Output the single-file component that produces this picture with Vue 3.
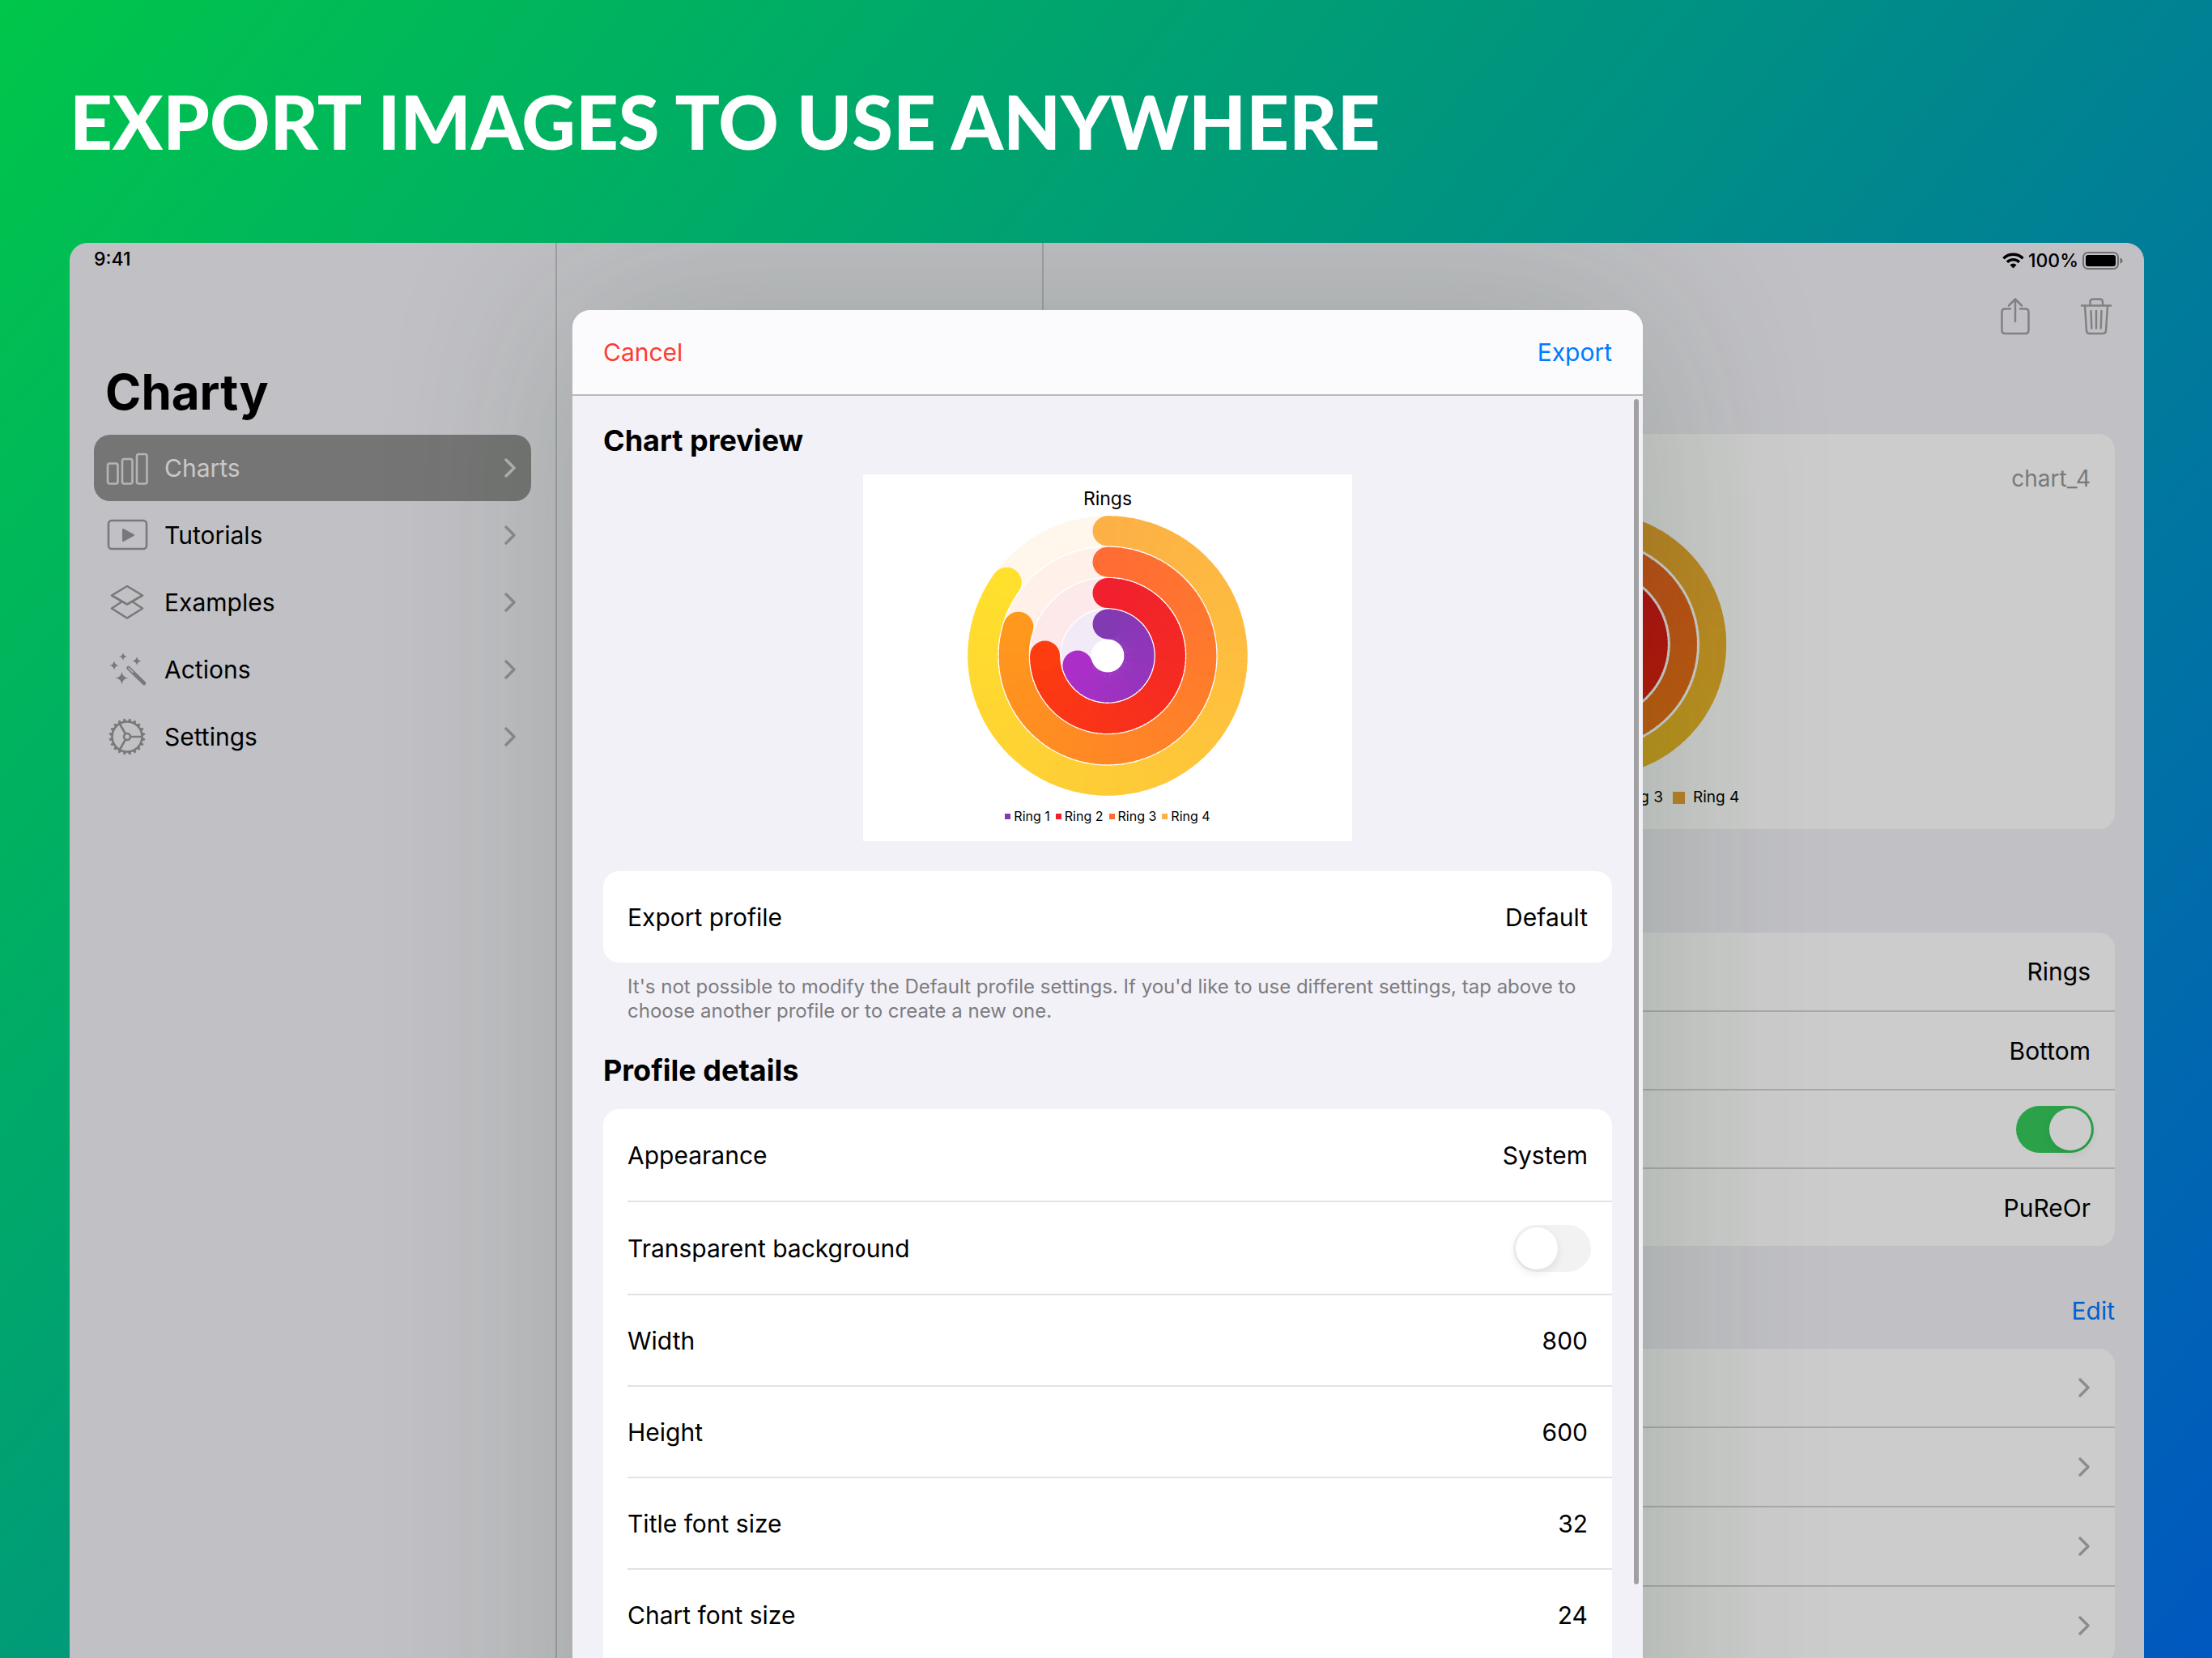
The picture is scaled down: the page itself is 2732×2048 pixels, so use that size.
<script setup>
import { reactive } from 'vue'

const menu = [
  { name: 'Charts', icon: 'charts', active: true },
  { name: 'Tutorials', icon: 'tutorials' },
  { name: 'Examples', icon: 'examples' },
  { name: 'Actions', icon: 'actions' },
  { name: 'Settings', icon: 'settings' },
]

const rings = [
  { name: 'Ring 1', from: [130, 58, 178], to: [172, 46, 200], share: 0.7 },
  { name: 'Ring 2', from: [240, 32, 46], to: [253, 60, 16], share: 0.75 },
  { name: 'Ring 3', from: [255, 108, 52], to: [255, 152, 28], share: 0.8 },
  { name: 'Ring 4', from: [253, 176, 70], to: [255, 224, 44], share: 0.85 },
]

const rgb = (c) => `rgb(${c.map(Math.round).join(',')})`
const mix = (a, b, t) => a.map((v, i) => v + (b[i] - v) * t)
const deepen = (c) => c.map((v, i) => Math.max(0, v - [20, 15, 20][i]))
const point = (r, deg) => {
  const a = (deg * Math.PI) / 180
  return [r * Math.sin(a), -r * Math.cos(a)]
}

// A ring is a chain of short arcs, so its colour can turn with the angle.
function buildRings(inner, pitch, tone = (c) => c) {
  return rings.map((ring, i) => {
    const r = inner + pitch * i
    const sweep = ring.share * 360
    const steps = 90
    const arcs = []
    for (let s = 0; s < steps; s++) {
      const [x0, y0] = point(r, (sweep * s) / steps)
      const [x1, y1] = point(r, Math.min(sweep, (sweep * (s + 1)) / steps + 1))
      arcs.push({ d: `M${x0} ${y0}A${r} ${r} 0 0 1 ${x1} ${y1}`, color: rgb(tone(mix(ring.from, ring.to, s / steps))) })
    }
    const [endX, endY] = point(r, sweep)
    return { r, arcs, endX, endY, start: rgb(tone(ring.from)), end: rgb(tone(ring.to)) }
  })
}
const previewRings = buildRings(39, 38.4)
const detailRings = buildRings(38, 36.2, deepen)

const teeth = Array.from({ length: 20 }, (_, i) => i * 18)

const settings = reactive({ title: true, transparent: false })
const details = [
  { label: 'Appearance', value: 'System' },
  { label: 'Transparent background', toggle: true },
  { label: 'Width', value: '800' },
  { label: 'Height', value: '600' },
  { label: 'Title font size', value: '32' },
  { label: 'Chart font size', value: '24' },
]
</script>

<template>
  <main class="poster">
    <h1 class="headline">EXPORT IMAGES TO USE ANYWHERE</h1>

    <div class="device">
      <div class="panes">
        <nav class="sidebar" aria-label="Main">
          <span class="clock">9:41</span>
          <h2 class="app-name">Charty</h2>
          <a v-for="item in menu" :key="item.name" href="#" class="menu-item" :class="{ active: item.active }">
            <svg class="menu-icon" viewBox="0 0 52 52" fill="none" stroke="currentColor" stroke-width="2.6" stroke-linejoin="round" stroke-linecap="round" aria-hidden="true">
              <g v-if="item.icon === 'charts'">
                <rect x="2" y="20.500" width="12.500" height="25" rx="2.500" />
                <rect x="20" y="15" width="12.500" height="30.500" rx="2.500" />
                <rect x="38" y="9" width="12.500" height="36.500" rx="2.500" />
              </g>
              <g v-else-if="item.icon === 'tutorials'">
                <rect x="3" y="8" width="47" height="35" rx="4" />
                <path d="M21 19v14l13-7z" fill="currentColor" stroke-width="2" />
              </g>
              <g v-else-if="item.icon === 'examples'">
                <path d="M26 6L45 17.500 26 28.500 7 17.500z" />
                <path d="M19 25.500L7 33.500 26 45.500 45 33.500 33 25.500" />
              </g>
              <g v-else-if="item.icon === 'actions'">
                <g fill="currentColor" stroke="none">
                  <path d="M21 5q.6 4.400 5 5q-4.400.6-5 5q-.6-4.400-5-5q4.400-.6 5-5z" />
                  <path d="M38 10q.6 4.900 6 5.500q-5.400.6-6 5.500q-.6-4.900-6-5.500q5.400-.6 6-5.500z" />
                  <path d="M10 15q.6 5.400 6 6q-5.400.6-6 6q-.6-5.400-6-6q5.400-.6 6-6z" />
                  <path d="M19.500 28.500q.8 7.200 8 8q-7.200.8-8 8q-.8-7.200-8-8q7.200-.8 8-8z" />
                </g>
                <path d="M27.500 24L47 43" stroke-width="4.600" />
                <path d="M27.800 24.200L33 29.300" stroke="#f2f1f7" stroke-width="1.400" />
              </g>
              <g v-else>
                <circle cx="26" cy="26" r="18.500" />
                <circle cx="26" cy="26" r="4" />
                <path d="M30 26h14M24 22.500L16.800 10M24 29.500L16.800 42" />
                <path v-for="a in teeth" :key="a" d="M23.800 7.500l1.400-3.600h1.600l1.400 3.600z" :transform="`rotate(${a + 9} 26 26)`" fill="currentColor" stroke-width=".6" />
              </g>
            </svg>
            <span class="menu-label">{{ item.name }}</span>
            <svg class="chevron" viewBox="0 0 16 24" aria-hidden="true"><path d="M3 2l10 10L3 22" /></svg>
          </a>
        </nav>

        <div class="list-pane"></div>

        <section class="detail">
          <div class="status">
            <svg width="27" height="20" viewBox="0 0 27 20" fill="none" stroke="#000" stroke-width="3.400" aria-hidden="true">
              <path d="M1.500 7.200a17 17 0 0 1 24 0" />
              <path d="M6 11.700a10.600 10.600 0 0 1 15 0" />
              <path d="M13.500 19.500l-4-4.200a5.600 5.600 0 0 1 8 0z" fill="#000" stroke="none" />
            </svg>
            <span>100%</span>
            <svg width="50" height="24" viewBox="0 0 50 24" aria-hidden="true">
              <rect x="1" y="2" width="43" height="20" rx="5.500" fill="none" stroke="#8c8c90" stroke-width="2" />
              <rect x="4" y="5" width="37" height="14" rx="3" />
              <path d="M46.500 8.500q3 1 3 3.500t-3 3.500z" fill="#8c8c90" />
            </svg>
          </div>
          <div class="toolbar">
            <button type="button" aria-label="Share">
              <svg width="40" height="48" viewBox="0 0 40 48" aria-hidden="true">
                <path d="M14 15.500H7.500q-4 0-4 4V42q0 4 4 4h25q4 0 4-4V19.500q0-4-4-4H26M20 31V3.500M12 11.500l8-8 8 8" />
              </svg>
            </button>
            <button type="button" aria-label="Delete">
              <svg width="40" height="48" viewBox="0 0 40 48" aria-hidden="true">
                <path d="M2 11.500h36M12.500 11V7q0-3.500 3.500-3.500h8.500q3.500 0 3.500 3.500v4M6 12l2 30.500q.3 3.500 3.500 3.500h17q3.200 0 3.500-3.500l2-30.500M13.500 18l.8 21.500M20 18v21.500M26.500 18l-.8 21.500" />
              </svg>
            </button>
          </div>

          <article class="card chart-card">
            <p class="chart-id">chart_4</p>
            <svg class="detail-rings" viewBox="-164 -164 328 328" role="img" aria-label="Rings">
              <g v-for="(ring, i) in detailRings" :key="i" fill="none" stroke-width="33">
                <circle :r="ring.r" :stroke="ring.start" opacity=".1" />
                <circle :cy="-ring.r" r="16.500" :fill="ring.start" />
                <path v-for="(arc, n) in ring.arcs" :key="n" :d="arc.d" :stroke="arc.color" />
                <circle :cx="ring.endX" :cy="ring.endY" r="16.500" :fill="ring.end" />
              </g>
            </svg>
            <ul class="legend">
              <li v-for="ring in rings" :key="ring.name">
                <i :style="{ background: rgb(deepen(ring.from)) }"></i>{{ ring.name }}
              </li>
            </ul>
          </article>

          <div class="card options">
            <div class="option">Rings</div>
            <div class="option">Bottom</div>
            <div class="option">
              <input v-model="settings.title" class="switch" type="checkbox" aria-label="Show title" />
            </div>
            <div class="option">PuReOr</div>
          </div>

          <div class="edit-bar"><button type="button" class="link">Edit</button></div>

          <div class="card data">
            <a v-for="n in 4" :key="n" href="#" class="option" :aria-label="`Ring ${n}`">
              <svg class="chevron" viewBox="0 0 16 24" aria-hidden="true"><path d="M3 2l10 10L3 22" /></svg>
            </a>
          </div>
        </section>
      </div>

      <div class="scrim">
        <section class="sheet" role="dialog" aria-label="Export">
          <header class="sheet-bar">
            <button type="button" class="link cancel">Cancel</button>
            <button type="button" class="link">Export</button>
          </header>
          <div class="sheet-body">
            <h3>Chart preview</h3>
            <figure class="preview">
              <figcaption>Rings</figcaption>
              <svg class="preview-rings" viewBox="-173 -173 346 346" role="img" aria-label="Rings">
                <g v-for="(ring, i) in previewRings" :key="i" fill="none" stroke-width="37">
                  <circle :r="ring.r" :stroke="ring.start" opacity=".1" />
                  <circle :cy="-ring.r" r="18.500" :fill="ring.start" />
                  <path v-for="(arc, n) in ring.arcs" :key="n" :d="arc.d" :stroke="arc.color" />
                  <circle :cx="ring.endX" :cy="ring.endY" r="18.500" :fill="ring.end" />
                </g>
              </svg>
              <ul class="legend small">
                <li v-for="ring in rings" :key="ring.name">
                  <i :style="{ background: rgb(ring.from) }"></i>{{ ring.name }}
                </li>
              </ul>
            </figure>

            <div class="group">
              <div class="row"><span>Export profile</span><span>Default</span></div>
            </div>
            <p class="hint">
              It's not possible to modify the Default profile settings. If you'd like to use different settings, tap above to choose another profile or to create a new one.
            </p>

            <h3>Profile details</h3>
            <div class="group open-ended">
              <template v-for="item in details" :key="item.label">
                <label v-if="item.toggle" class="row tall">
                  <span>{{ item.label }}</span>
                  <input v-model="settings.transparent" class="switch" type="checkbox" />
                </label>
                <div v-else class="row"><span>{{ item.label }}</span><span>{{ item.value }}</span></div>
              </template>
            </div>
          </div>
          <span class="scroll-thumb"></span>
        </section>
      </div>
    </div>
  </main>
</template>

<style>
body {
  margin: 0;
}
</style>

<style scoped>
* {
  box-sizing: border-box;
}
h1, h2, h3, p, ul, figure {
  margin: 0;
  padding: 0;
}
button {
  padding: 0;
  border: 0;
  background: none;
  font: inherit;
}
.poster {
  display: flex;
  flex-direction: column;
  height: 100vh;
  overflow: hidden;
  padding: 0 84px 0 86px;
  background: linear-gradient(129deg, #00c64a, #0058c0);
  font-family: Inter, "Liberation Sans", sans-serif;
  font-size: 30px;
  line-height: 40px;
  color: #000;
}
.headline {
  flex: none;
  height: 300px;
  padding-top: 94px;
  font-family: Lato, "Open Sans", sans-serif;
  font-size: 92px;
  font-weight: 900;
  line-height: 112px;
  color: #fff;
  white-space: nowrap;
}
.device {
  position: relative;
  flex: 1;
  min-height: 0;
  border-radius: 22px 22px 0 0;
  overflow: hidden;
  background: #f2f1f7;
}
.panes {
  display: grid;
  grid-template-columns: 602px 601px 1fr;
  height: 100%;
}
.sidebar {
  padding: 0 30px;
  border-right: 2px solid #cacacc;
}
.clock {
  display: block;
  font-size: 23px;
  font-weight: 500;
  line-height: 40px;
}
.app-name {
  margin: 108px 0 17px 14px;
  font-size: 60px;
  font-weight: 700;
  line-height: 72px;
}
.menu-item {
  display: flex;
  align-items: center;
  height: 82px;
  margin-bottom: 1px;
  padding: 0 18px 0 15px;
  border-radius: 20px;
  color: #98989a;
  text-decoration: none;
}
.menu-icon {
  width: 52px;
  height: 52px;
}
.menu-label {
  flex: 1;
  margin-left: 20px;
  color: #000;
}
.menu-item.active {
  background: #939393;
  color: #e2e2e2;
}
.active .menu-label {
  color: #fafafa;
}
.chevron {
  width: 16px;
  height: 24px;
  fill: none;
  stroke: #b0b0b2;
  stroke-width: 3.4;
  stroke-linecap: round;
  stroke-linejoin: round;
}
.active .chevron {
  stroke: #e2e2e2;
}
.list-pane {
  border-right: 2px solid #cacacc;
}
.detail {
  padding: 0 36px;
}
.status {
  display: flex;
  justify-content: flex-end;
  align-items: center;
  gap: 5px;
  height: 44px;
  margin-right: -10px;
  font-size: 23px;
  font-weight: 500;
}
.toolbar {
  display: flex;
  justify-content: flex-end;
  align-items: flex-start;
  gap: 60px;
  height: 192px;
  padding: 22px 3px 0 0;
}
.toolbar svg {
  display: block;
  fill: none;
  stroke: #a2a2a4;
  stroke-width: 2.5;
  stroke-linecap: round;
  stroke-linejoin: round;
}
.card {
  border-radius: 20px;
  background: #fff;
}
.chart-card {
  display: flex;
  flex-direction: column;
  align-items: center;
  height: 488px;
  padding: 35px 30px 0;
}
.chart-id {
  align-self: flex-end;
  font-size: 28px;
  color: #98989c;
}
.detail-rings {
  flex: none;
  width: 328px;
  height: 328px;
  margin-top: 21px;
}
.legend {
  display: flex;
  gap: 12px;
  margin-top: 13px;
  list-style: none;
  font-size: 19px;
  line-height: 24px;
  white-space: nowrap;
}
.legend li {
  display: flex;
  align-items: center;
  gap: 10px;
}
.legend i {
  width: 15px;
  height: 15px;
}
.options {
  margin-top: 128px;
}
.option {
  display: flex;
  justify-content: flex-end;
  align-items: center;
  height: 97px;
  padding: 0 30px;
  border-top: 2px solid #d4d4d4;
}
.data .option {
  height: 98px;
}
.card .option:first-child {
  height: 96px;
  border-top: 0;
}
.edit-bar {
  display: flex;
  justify-content: flex-end;
  margin: 60px 0 27px;
}
.link {
  color: #007aff;
}
.cancel {
  color: #ff3b30;
}
.switch {
  appearance: none;
  width: 96px;
  height: 58px;
  margin: 0 -4px;
  padding: 3px;
  border-radius: 29px;
  background: #f2f2f2;
}
.switch::before {
  content: "";
  display: block;
  width: 52px;
  height: 52px;
  border-radius: 50%;
  background: #fff;
  box-shadow: 0 4px 12px rgba(0, 0, 0, 0.09);
}
.switch:checked {
  background: #36cb5c;
}
.switch:checked::before {
  margin-left: 38px;
}
.scrim {
  position: absolute;
  inset: 0;
  display: flex;
  justify-content: center;
  padding-left: 2px;
  background: rgba(0, 0, 0, 0.2);
}
.sheet {
  position: relative;
  width: 1322px;
  margin: 83px 0 -240px;
  border-radius: 22px 22px 0 0;
  background: #f2f1f7;
  box-shadow: 0 0 230px rgba(25, 65, 25, 0.22);
}
.sheet-bar {
  display: flex;
  justify-content: space-between;
  align-items: center;
  height: 106px;
  padding: 0 38px;
  border-bottom: 2px solid #b9b9bc;
  border-radius: 22px 22px 0 0;
  background: #fbfbfd;
}
.sheet-body {
  padding: 33px 38px 0;
}
h3 {
  font-size: 36px;
  font-weight: 700;
  line-height: 44px;
}
.preview {
  display: flex;
  flex-direction: column;
  align-items: center;
  width: 604px;
  height: 453px;
  margin: 20px auto 37px;
  padding-top: 14px;
  background: #fff;
}
.preview figcaption {
  font-size: 23px;
  line-height: 32px;
}
.preview-rings {
  flex: none;
  width: 346px;
  height: 346px;
  margin-top: 5px;
}
.small {
  gap: 7px;
  font-size: 16px;
}
.small li {
  gap: 4px;
}
.small i {
  width: 7px;
  height: 7px;
}
.group {
  border-radius: 20px;
  background: #fff;
}
.open-ended {
  padding-bottom: 40px;
}
.row {
  display: flex;
  justify-content: space-between;
  align-items: center;
  height: 113px;
  margin-left: 30px;
  padding-right: 30px;
}
.tall {
  height: 115px;
}
.row + .row {
  border-top: 2px solid #e2e2e3;
}
.hint {
  margin: 15px 0 36px;
  padding: 0 30px;
  font-size: 24px;
  line-height: 30px;
  color: #7c7c80;
}
h3 + .group {
  margin-top: 26px;
}
.scroll-thumb {
  position: absolute;
  top: 110px;
  right: 5px;
  width: 6px;
  height: 1464px;
  border-radius: 3px;
  background: #a0a0a2;
}
</style>
